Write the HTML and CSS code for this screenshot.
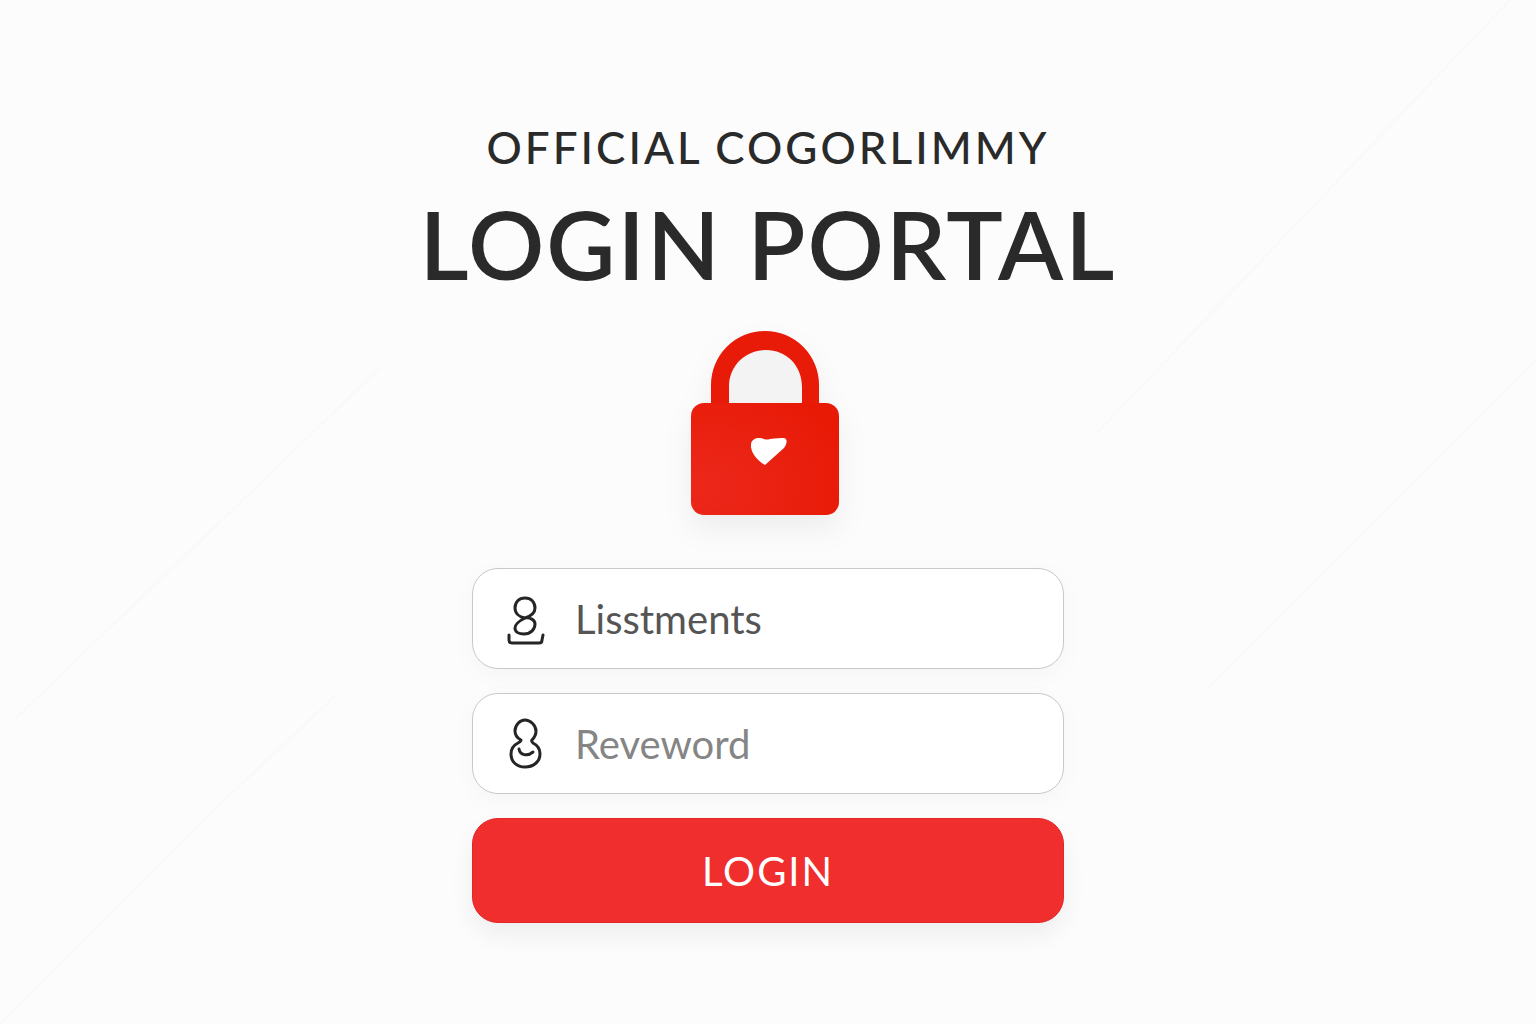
FILE: index.html
```html
<!DOCTYPE html>
<html lang="en">
<head>
    <meta charset="UTF-8">
    <meta name="viewport" content="width=device-width, initial-scale=1.0">
    <title>Login Portal</title>
    <link rel="stylesheet" href="styles.css">
</head>
<body>

    <svg class="lines" viewBox="0 0 1536 1024" preserveAspectRatio="none" aria-hidden="true">
        <path d="M15 719 380 368M0 1024 235 790M235 790 335 696M1095 435 1510 0M1205 690 1536 360"/>
    </svg>

    <main class="container">
        <h1 class="heading">
            <span class="subtitle">OFFICIAL COGORLIMMY</span>
            <span class="title">LOGIN PORTAL</span>
        </h1>

        <svg class="lock" viewBox="0 0 156 186" aria-hidden="true">
            <defs>
                <radialGradient id="red" cx="0.1" cy="0.75" r="1">
                    <stop offset="0" stop-color="#ec281b"/>
                    <stop offset="1" stop-color="#e81a06"/>
                </radialGradient>
            </defs>
            <path d="M39 73V55a36 36 0 0 1 73 0v18z" fill="#f3f3f3"/>
            <path d="M21 78V55a54 54 0 0 1 108 0v23h-17V57c0-22-16-37-36-37S39 35 39 57v21z" fill="#e81b08"/>
            <rect x="1" y="73" width="148" height="112" rx="13" fill="url(#red)"/>
            <path d="M75 135C66 130 60 121 61 114C62 108 69 107 74 109Q77 110 80 109C86 108 91 108 94 108C98 109 97 114 94 118Z" fill="#fff"/>
        </svg>

        <form class="form">
            <label class="field">
                <svg class="icon" viewBox="0 0 40 52" aria-hidden="true">
                    <path d="M20 25C14 24 10 20 10 15C10 9 14 5 20 5S30 9 30 15C30 20 26 23 20 25C14 28 10 32 10 35C10 39 14 41 19 41C26 41 30 36 30 31C30 27 25 24 20 25Z"/>
                    <path d="M4 42L4 47Q4 50 7 50H34Q37 50 37 47L38 42"/>
                </svg>
                <input class="user" type="text" value="Lisstments" aria-label="Lisstments">
            </label>

            <label class="field">
                <svg class="icon" viewBox="0 0 40 52" aria-hidden="true">
                    <path d="M16 22C12 20 10 17 10 13C10 7 15 2 20 2S31 7 31 13C31 17 29 20 27 22C26 23 27 24 28 25C32 27 35 31 35 36C35 44 28 49 20 49S6 44 6 36C6 31 9 27 13 25C15 24 16 23 16 22Z"/>
                    <path d="M14 31C15 37 22 39 28 34"/>
                </svg>
                <input type="password" placeholder="Reveword" aria-label="Reveword">
            </label>

            <button class="login" type="submit">LOGIN</button>
        </form>
    </main>

</body>
</html>
```

FILE: styles.css
```css
* {
    box-sizing: border-box;
}
body {
    margin: 0;
    min-height: 100vh;
    font-family: Lato, sans-serif;
    background-color: #fcfcfc;
    color: #2a2a2a;
}
.lines {
    position: absolute;
    inset: 0;
    width: 100%;
    height: 100%;
    z-index: -1;
    fill: none;
    stroke: #f9f9f9;
    stroke-width: 2;
}
.container {
    display: flex;
    flex-direction: column;
    align-items: center;
    padding: 119px 20px 100px;
}
.heading {
    display: flex;
    flex-direction: column;
    gap: 14px;
    margin: 0 0 33px;
    text-align: center;
}
.subtitle {
    font-size: 44px;
    font-weight: 500;
    line-height: 56px;
    letter-spacing: 3px;
}
.title {
    font-size: 95px;
    font-weight: 600;
    line-height: 108px;
    letter-spacing: 2px;
}
.lock {
    width: 156px;
    height: 186px;
    margin-bottom: 52px;
    filter: drop-shadow(0 14px 14px rgba(0, 0, 0, 0.06));
}
.form {
    display: flex;
    flex-direction: column;
    gap: 24px;
    width: 100%;
    max-width: 592px;
}
.field {
    display: flex;
    align-items: center;
    gap: 30px;
    height: 101px;
    padding: 0 32px;
    background: white;
    border: 1px solid #c9c9c9;
    border-radius: 26px;
    box-shadow: 0 6px 24px rgba(0, 0, 0, 0.03);
}
.icon {
    flex: none;
    width: 40px;
    height: 52px;
    fill: none;
    stroke: #252525;
    stroke-width: 3;
    stroke-linecap: round;
    stroke-linejoin: round;
}
input {
    flex: 1;
    min-width: 0;
    padding: 0;
    border: none;
    outline: none;
    background: none;
    font-family: inherit;
    font-size: 40px;
    color: #555;
}
input::placeholder {
    color: #858585;
    opacity: 1;
}
.login {
    height: 105px;
    border: 1px solid #e32626;
    border-radius: 26px;
    background: #f02e2d;
    color: white;
    font-family: inherit;
    font-size: 40px;
    letter-spacing: 2px;
    box-shadow: 0 12px 24px rgba(0, 0, 0, 0.06);
    cursor: pointer;
}
```
